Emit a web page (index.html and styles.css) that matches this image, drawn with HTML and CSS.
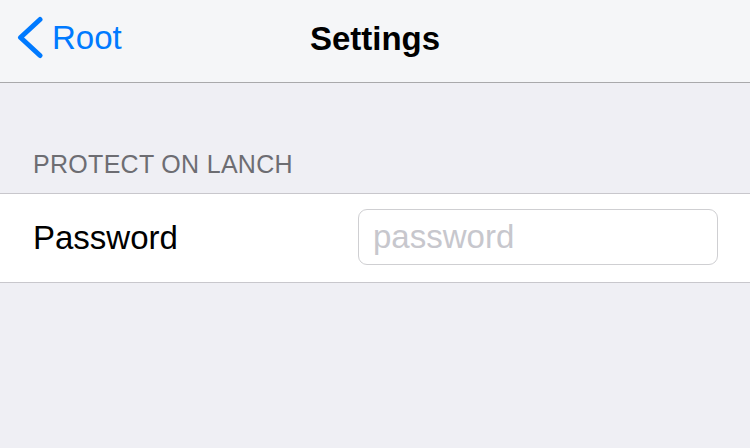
FILE: index.html
```html
<!DOCTYPE html>
<html>
<head>
<meta charset="utf-8">
<link rel="stylesheet" href="styles.css">
</head>
<body>
<div class="screen">
  <header class="navbar">
    <a class="back">
      <svg class="chev" width="28" height="44" viewBox="0 0 28 44"><path d="M25 3.5 L5.5 21.5 L25 39.5" fill="none" stroke="#007aff" stroke-width="5" stroke-linecap="round" stroke-linejoin="round"/></svg>
      <span class="back-label">Root</span>
    </a>
    <h1 class="title">Settings</h1>
  </header>
  <div class="section-header">PROTECT ON LANCH</div>
  <div class="cell">
    <span class="cell-label">Password</span>
    <input class="field" type="password" placeholder="password">
  </div>
</div>
</body>
</html>
```
FILE: styles.css
```css
html, body {
  margin: 0;
  padding: 0;
}
body {
  background: #efeff4;
  font-family: "Liberation Sans", Arial, sans-serif;
  width: 750px;
  height: 448px;
  overflow: hidden;
}
.screen {
  display: flex;
  flex-direction: column;
}
.navbar {
  position: relative;
  height: 82px;
  background: #f5f6f8;
  border-bottom: 1px solid #a9a9ab;
  display: flex;
  align-items: center;
  justify-content: center;
}
.back {
  position: absolute;
  left: 15px;
  top: 16px;
  display: flex;
  align-items: center;
  color: #007aff;
  gap: 9px;
}
.chev {
  display: block;
}
.back-label {
  font-size: 33px;
  line-height: 42px;
}
.title {
  margin: 0;
  font-size: 33px;
  font-weight: bold;
  color: #000;
  line-height: 42px;
  margin-top: -5px;
}
.section-header {
  margin-top: 66px;
  padding-left: 33px;
  font-size: 25px;
  letter-spacing: 0.3px;
  color: #6d6d72;
  line-height: 30px;
  height: 44px;
}
.cell {
  background: #fff;
  border-top: 1px solid #c8c7cc;
  border-bottom: 1px solid #c8c7cc;
  height: 88px;
  display: flex;
  align-items: center;
  justify-content: space-between;
  padding: 0 32px 0 33px;
}
.cell-label {
  font-size: 33px;
  color: #000;
}
.field {
  box-sizing: border-box;
  width: 360px;
  height: 56px;
  margin-bottom: 3px;
  border: 1px solid #cfcfd2;
  border-radius: 9px;
  padding: 0 14px;
  font-family: "Liberation Sans", Arial, sans-serif;
  font-size: 33px;
  outline: none;
  background: #fff;
}
.field::placeholder {
  color: #c7c7cd;
}
```
